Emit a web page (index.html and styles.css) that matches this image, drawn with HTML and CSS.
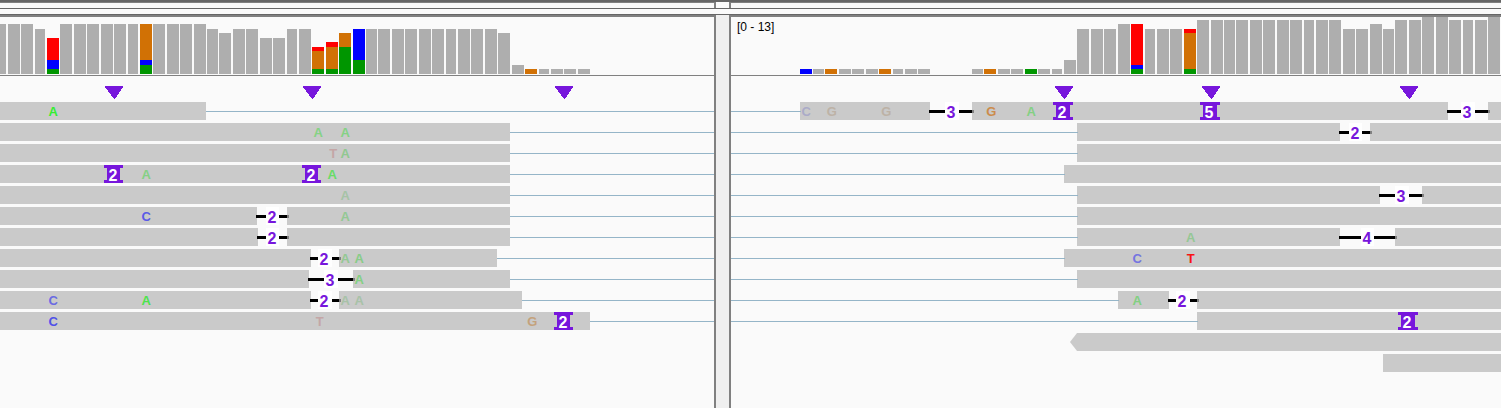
FILE: index.html
```html
<!DOCTYPE html>
<html lang="en">
<head>
<meta charset="utf-8">
<title>Alignment viewer</title>
<link rel="stylesheet" href="styles.css">
</head>
<body>
<main class="viewer">
  <div class="frame-top"></div>
  <div class="header-strip">
    <div class="header-left"></div>
    <div class="header-gap"></div>
    <div class="header-right"></div>
  </div>
  <div class="strip"></div>
  <div class="panels">
    <section class="panel panel-left" id="left"></section>
    <div class="splitter"></div>
    <section class="panel panel-right" id="right"></section>
  </div>
</main>
<script src="viewer.js"></script>
</body>
</html>
```
FILE: styles.css
```css
* { box-sizing: border-box; }

body {
  margin: 0;
  background: #fafafa;
  font-family: "Liberation Sans", Arial, sans-serif;
  overflow: hidden;
}

.viewer {
  display: flex;
  flex-direction: column;
  height: 408px;
  width: 1501px;
}

.frame-top { height: 2px; background: #666; }

.header-strip { display: flex; height: 7px; border-bottom: 1px solid #666; }
.header-left { width: 716px; border-top: 1px solid #808080; border-right: 2px solid #808080; }
.header-gap { width: 13px; }
.header-right { flex: 1; border-top: 1px solid #808080; border-left: 2px solid #808080; }

.strip { height: 6px; border-bottom: 1px solid #666; }

.panels { display: flex; flex: 1; }
.panel { display: flex; flex-direction: column; border-top: 2px solid #808080; overflow: hidden; }
.panel-left { width: 716px; border-right: 2px solid #808080; }
.panel-right { width: 772px; border-left: 2px solid #808080; }
.splitter { width: 13px; background: #efefef; }

.coverage {
  position: relative;
  display: flex;
  align-items: flex-end;
  height: 59px;
  padding-bottom: 1px;
  border-bottom: 1px solid #808080;
}
.bar { display: flex; flex-direction: column; flex: none; }
.base-n { background: #aeaeae; }
.base-a { background: #009600; }
.base-c { background: #00f; }
.base-g { background: #d17105; }
.base-t { background: #f00; }

.range { position: absolute; left: 6px; top: 3px; font-size: 12px; line-height: 14px; color: #000; }

.markers { position: relative; height: 26px; flex: none; }
.marker { position: absolute; top: 10px; width: 18px; height: 13px; fill: #7716dc; }

.read { position: relative; display: flex; height: 18px; margin-bottom: 3px; flex: none; }
.segment { flex: none; background: #cacaca; }
.segment-reverse { clip-path: polygon(0 50%, 7px 0, 100% 0, 100% 100%, 7px 100%); }
.pair-line { height: 1px; margin-top: 9px; flex: none; background: #95b5c8; }
.pair-line-before { margin-right: -1px; z-index: 1; }

.gap { display: flex; position: relative; flex: none; height: 18px; align-items: flex-start; z-index: 1; }
.gap::before { content: ""; position: absolute; left: -1px; right: 0; top: 8px; height: 3px; background: #000; }
.gap::after { content: ""; position: absolute; right: -2px; width: 2px; top: 8px; height: 3px; background: #808080; }
.gap-size {
  position: relative;
  z-index: 1;
  height: 18px;
  padding-left: 1.5px;
  background: #fff;
  color: #7716dc;
  font-weight: bold;
  font-size: 16px;
  line-height: 22px;
}

.base {
  position: absolute;
  top: 0;
  width: 14px;
  text-align: center;
  font-size: 13px;
  line-height: 19px;
  font-weight: bold;
}

.insertion {
  position: absolute;
  top: 0;
  height: 18px;
  border: solid #7716dc;
  border-width: 3px 0;
  display: flex;
}
.insertion-size {
  flex: 1;
  margin: 0 3px;
  padding-left: 1.5px;
  height: 12px;
  background: #7716dc;
  color: #fff;
  font-weight: bold;
  font-size: 16px;
  line-height: 16px;
}
```
FILE: viewer.js
```javascript
// Coverage: [start, end, height] or [start, end, [[base, height], ...]] from top to bottom.
// Reads: s = start, e = end, gaps = [start, end, labelStart, labelEnd, size],
// bases = [centre, base, colour], ins = [start, end, size].
const views = {
  left: {
    origin: 0, width: 714,
    coverage: [
      [0,6,50],[8,20,50],[21,33,50],[35,45,45],[47,59,[["t",22],["c",9],["a",5]]],
      [60,72,50],[74,86,50],[87,99,50],[101,113,50],[114,126,50],[128,138,50],
      [140,152,[["g",36],["c",5],["a",9]]],[153,165,50],[167,179,50],[180,192,50],
      [194,206,50],[207,218,45],[219,231,41],[233,245,45],[246,258,45],[260,272,36],
      [273,285,36],[287,297,45],[299,311,45],[312,324,[["t",4],["g",18],["a",5]]],
      [326,338,[["t",5],["g",22],["a",5]]],[339,351,[["g",14],["a",27]]],
      [353,365,[["c",31],["a",14]]],[366,377,45],[378,390,45],[392,404,45],[405,417,45],
      [419,431,45],[432,444,45],[446,456,45],[458,470,45],[471,483,45],[485,497,45],
      [498,510,41],[512,524,9],[525,537,[["g",5]]],[539,549,5],[551,563,5],[564,576,5],[578,590,5]
    ],
    markers: [105, 303, 555],
    reads: [
      {s:0,e:206,bases:[[53,"A","#33ee33"]]},
      {s:0,e:510,bases:[[318,"A","#85d285"],[345,"A","#85d285"]]},
      {s:0,e:510,bases:[[333,"T","#c4a6a6"],[345,"A","#90c890"]]},
      {s:0,e:510,bases:[[146,"A","#85d085"],[332,"A","#68dc68"]],ins:[[104,123,2],[302,321,2]]},
      {s:0,e:510,bases:[[345,"A","#a6c3a6"]]},
      {s:0,e:510,gaps:[[257,287,266,279,2]],bases:[[146,"C","#5a5ae6"],[345,"A","#94c894"]]},
      {s:0,e:510,gaps:[[258,287,266,279,2]]},
      {s:0,e:497,gaps:[[311,339,318,332,2]],bases:[[345,"A","#94c894"],[359,"A","#88cc88"]]},
      {s:0,e:510,gaps:[[309,353,324,338,3]],bases:[[359,"A","#84d084"]]},
      {s:0,e:522,gaps:[[311,339,318,332,2]],bases:[[53,"C","#6a6ae2"],[146,"A","#4de34d"],[345,"A","#a8c2a8"],[359,"A","#a8c2a8"]]},
      {s:0,e:590,bases:[[53,"C","#5050e8"],[319.5,"T","#c4a6a6"],[532,"G","#c4a27c"]],ins:[[554,573,2]]}
    ]
  },
  right: {
    origin: 731, width: 770, range: "[0 - 13]",
    coverage: [
      [800,812,[["c",5]]],[813,824,5],[825,837,[["g",5]]],[839,851,5],[852,864,5],[866,878,5],
      [879,891,[["g",5]]],[893,903,5],[905,917,5],[918,930,5],[972,983,5],[984,996,[["g",5]]],
      [998,1010,5],[1011,1023,5],[1025,1037,[["a",5]]],[1038,1050,5],[1052,1062,5],[1064,1076,14],
      [1077,1089,45],[1091,1103,45],[1104,1116,45],[1118,1130,50],[1131,1143,[["t",41],["c",4],["a",5]]],
      [1145,1155,45],[1157,1169,45],[1170,1182,45],[1184,1196,[["t",4],["g",36],["a",5]]],
      [1197,1209,54],[1211,1223,54],[1224,1235,54],[1236,1248,54],[1250,1262,54],[1263,1275,54],
      [1277,1289,54],[1290,1302,54],[1304,1314,54],[1316,1328,54],[1329,1341,54],[1343,1355,45],
      [1356,1368,45],[1370,1382,50],[1383,1394,45],[1395,1407,54],[1409,1421,54],[1422,1434,57],
      [1436,1448,57],[1449,1461,54],[1463,1473,54],[1475,1487,54],[1488,1500,57]
    ],
    markers: [1055, 1202, 1400],
    reads: [
      {s:800,e:1501,gaps:[[930,972,945,959,3],[1448,1488,1461,1475,3]],
       bases:[[806,"C","#aaaac8"],[831.5,"G","#bdb2a6"],[886,"G","#bdb2a6"],[991,"G","#cc8c4c"],[1031,"A","#84d084"]],
       ins:[[1053,1073,2],[1200,1220,5]]},
      {s:1077,e:1501,gaps:[[1340,1370,1349,1362,2]]},
      {s:1077,e:1501},
      {s:1064,e:1501},
      {s:1077,e:1501,gaps:[[1380,1422,1395,1409,3]]},
      {s:1077,e:1501},
      {s:1077,e:1501,gaps:[[1340,1395,1361,1374,4]],bases:[[1190.5,"A","#95c795"]]},
      {s:1064,e:1501,bases:[[1137,"C","#7474e0"],[1190.5,"T","#f81414"]]},
      {s:1077,e:1501},
      {s:1118,e:1501,gaps:[[1169,1197,1176,1190,2]],bases:[[1137,"A","#82d082"]]},
      {s:1197,e:1501,ins:[[1398,1418,2]]},
      {s:1070,e:1501,single:true,reverse:true},
      {s:1383,e:1501,single:true}
    ]
  }
};

function add(parent, className, style, text) {
  const node = document.createElement("div");
  node.className = className;
  Object.assign(node.style, style || {});
  if (text !== undefined) node.textContent = text;
  parent.appendChild(node);
  return node;
}
const px = n => n + "px";

for (const [id, view] of Object.entries(views)) {
  const panel = document.getElementById(id);
  const coverage = add(panel, "coverage");
  if (view.range) add(coverage, "range", {}, view.range);
  let cursor = view.origin;
  for (const [start, end, depth] of view.coverage) {
    const bar = add(coverage, "bar", { width: px(end - start), marginLeft: px(start - cursor) });
    const parts = Array.isArray(depth) ? depth : [["n", depth]];
    for (const [base, height] of parts) add(bar, "base-" + base, { height: px(height) });
    cursor = end;
  }

  const markers = add(panel, "markers");
  for (const x of view.markers) {
    markers.insertAdjacentHTML("beforeend",
      `<svg class="marker" style="left:${x - view.origin}px" viewBox="0 0 18 13" shape-rendering="crispEdges"><path d="M0 0H18V1L10 13H9L0 1Z"/></svg>`);
  }

  for (const read of view.reads) {
    const row = add(panel, "read");
    const lead = read.s - view.origin;
    if (lead > 0 && !read.single) add(row, "pair-line pair-line-before", { width: px(lead + 1) });
    let x = read.s;
    const segment = end => {
      const node = add(row, "segment" + (read.reverse ? " segment-reverse" : ""), { width: px(end - x) });
      if (read.single) node.style.marginLeft = px(lead);
    };
    for (const [start, end, labelStart, labelEnd, size] of read.gaps || []) {
      segment(start);
      const gap = add(row, "gap", { width: px(end - start) });
      add(gap, "gap-size", { marginLeft: px(labelStart - start), width: px(labelEnd - labelStart) }, size);
      x = end;
    }
    segment(read.e);
    const tail = view.origin + view.width - read.e;
    if (tail > 0) add(row, "pair-line", { width: px(tail) });
    for (const [centre, base, color] of read.bases || [])
      add(row, "base", { left: px(centre - 6.75 - view.origin), color }, base);
    for (const [start, end, size] of read.ins || []) {
      const ins = add(row, "insertion", { left: px(start - view.origin), width: px(end - start) });
      add(ins, "insertion-size", {}, size);
    }
  }
}
```
